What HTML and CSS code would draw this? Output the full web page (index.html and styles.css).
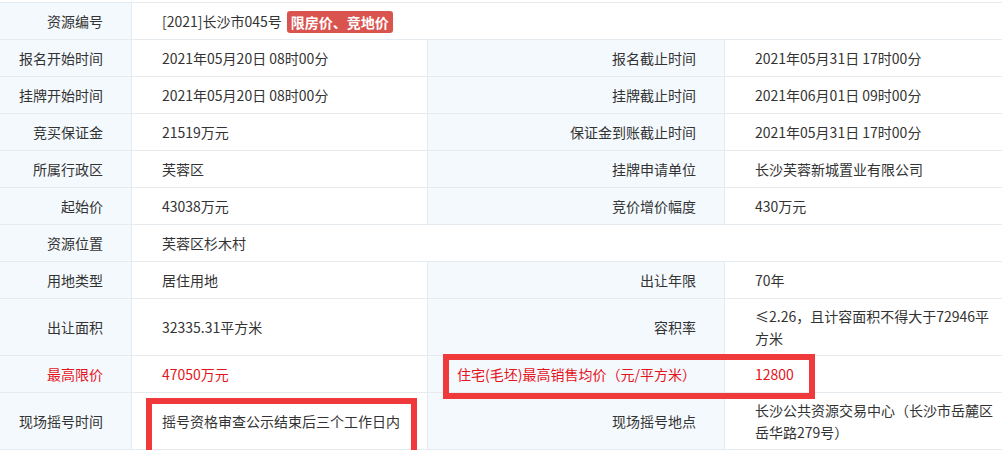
FILE: index.html
```html
<!DOCTYPE html>
<html lang="zh-CN">
<head>
    <meta charset="UTF-8">
    <title>资源详情</title>
    <link rel="stylesheet" href="styles.css">
</head>
<body>
    <div class="detail">
        <table class="info-table">
            <colgroup>
                <col class="col-label1">
                <col class="col-value1">
                <col class="col-label2">
                <col class="col-value2">
            </colgroup>
            <tr>
                <th>资源编号</th>
                <td colspan="3">[2021]长沙市045号<span class="tag">限房价、竞地价</span></td>
            </tr>
            <tr>
                <th>报名开始时间</th>
                <td>2021年05月20日 08时00分</td>
                <th>报名截止时间</th>
                <td>2021年05月31日 17时00分</td>
            </tr>
            <tr>
                <th>挂牌开始时间</th>
                <td>2021年05月20日 08时00分</td>
                <th>挂牌截止时间</th>
                <td>2021年06月01日 09时00分</td>
            </tr>
            <tr>
                <th>竞买保证金</th>
                <td>21519万元</td>
                <th>保证金到账截止时间</th>
                <td>2021年05月31日 17时00分</td>
            </tr>
            <tr>
                <th>所属行政区</th>
                <td>芙蓉区</td>
                <th>挂牌申请单位</th>
                <td>长沙芙蓉新城置业有限公司</td>
            </tr>
            <tr>
                <th>起始价</th>
                <td>43038万元</td>
                <th>竞价增价幅度</th>
                <td>430万元</td>
            </tr>
            <tr>
                <th>资源位置</th>
                <td colspan="3">芙蓉区杉木村</td>
            </tr>
            <tr>
                <th>用地类型</th>
                <td>居住用地</td>
                <th>出让年限</th>
                <td>70年</td>
            </tr>
            <tr>
                <th>出让面积</th>
                <td>32335.31平方米</td>
                <th>容积率</th>
                <td>≤2.26，且计容面积不得大于72946平方米</td>
            </tr>
            <tr class="highlight">
                <th>最高限价</th>
                <td>47050万元</td>
                <th>住宅(毛坯)最高销售均价（元/平方米）</th>
                <td>12800</td>
            </tr>
            <tr>
                <th>现场摇号时间</th>
                <td>摇号资格审查公示结束后三个工作日内</td>
                <th>现场摇号地点</th>
                <td>长沙公共资源交易中心（长沙市岳麓区岳华路279号）</td>
            </tr>
        </table>

        <!-- 标注框 -->
        <div class="mark mark-price"></div>
        <div class="mark mark-time"></div>
    </div>
</body>
</html>
```

FILE: styles.css
```css
body {
    margin: 0;
    padding-top: 2px;
    font-family: "Noto Sans CJK SC", "Microsoft YaHei", sans-serif;
    font-size: 14px;
    color: #333;
    background-color: #fff;
    overflow: hidden;
}

.detail {
    position: relative;
    width: 1002px;
}

.info-table {
    width: 1002px;
    table-layout: fixed;
    border-collapse: separate;
    border-spacing: 0;
    border-top: 1px solid #e6ebf0;
}

.col-label1 { width: 132px; }
.col-value1 { width: 296px; }
.col-label2 { width: 297px; }
.col-value2 { width: 277px; }

.info-table th,
.info-table td {
    height: 24px;
    line-height: 22px;
    padding: 6px 0;
    border-bottom: 1px solid #e6ebf0;
    border-right: 1px solid #e6ebf0;
    vertical-align: middle;
    word-break: break-all;
}

.info-table th {
    font-weight: normal;
    text-align: right;
    padding-right: 28px;
    background-color: #f4f9fd;
}

.info-table td {
    text-align: left;
    padding-left: 30px;
    padding-right: 5px;
}

.info-table td:last-child {
    border-right: none;
}

.highlight th,
.highlight td {
    color: #e5141c;
}

.tag {
    display: inline-block;
    margin-left: 5px;
    padding: 0 4px;
    height: 22px;
    line-height: 22px;
    border-radius: 3px;
    background-color: #d9534f;
    color: #fff;
    font-weight: bold;
    vertical-align: -1px;
}

.mark {
    position: absolute;
    border: 6px solid #f0393b;
    box-sizing: border-box;
}

.mark-price {
    left: 443px;
    top: 352px;
    width: 372px;
    height: 45px;
}

.mark-time {
    left: 146px;
    top: 396px;
    width: 271px;
    height: 58px;
}
```
